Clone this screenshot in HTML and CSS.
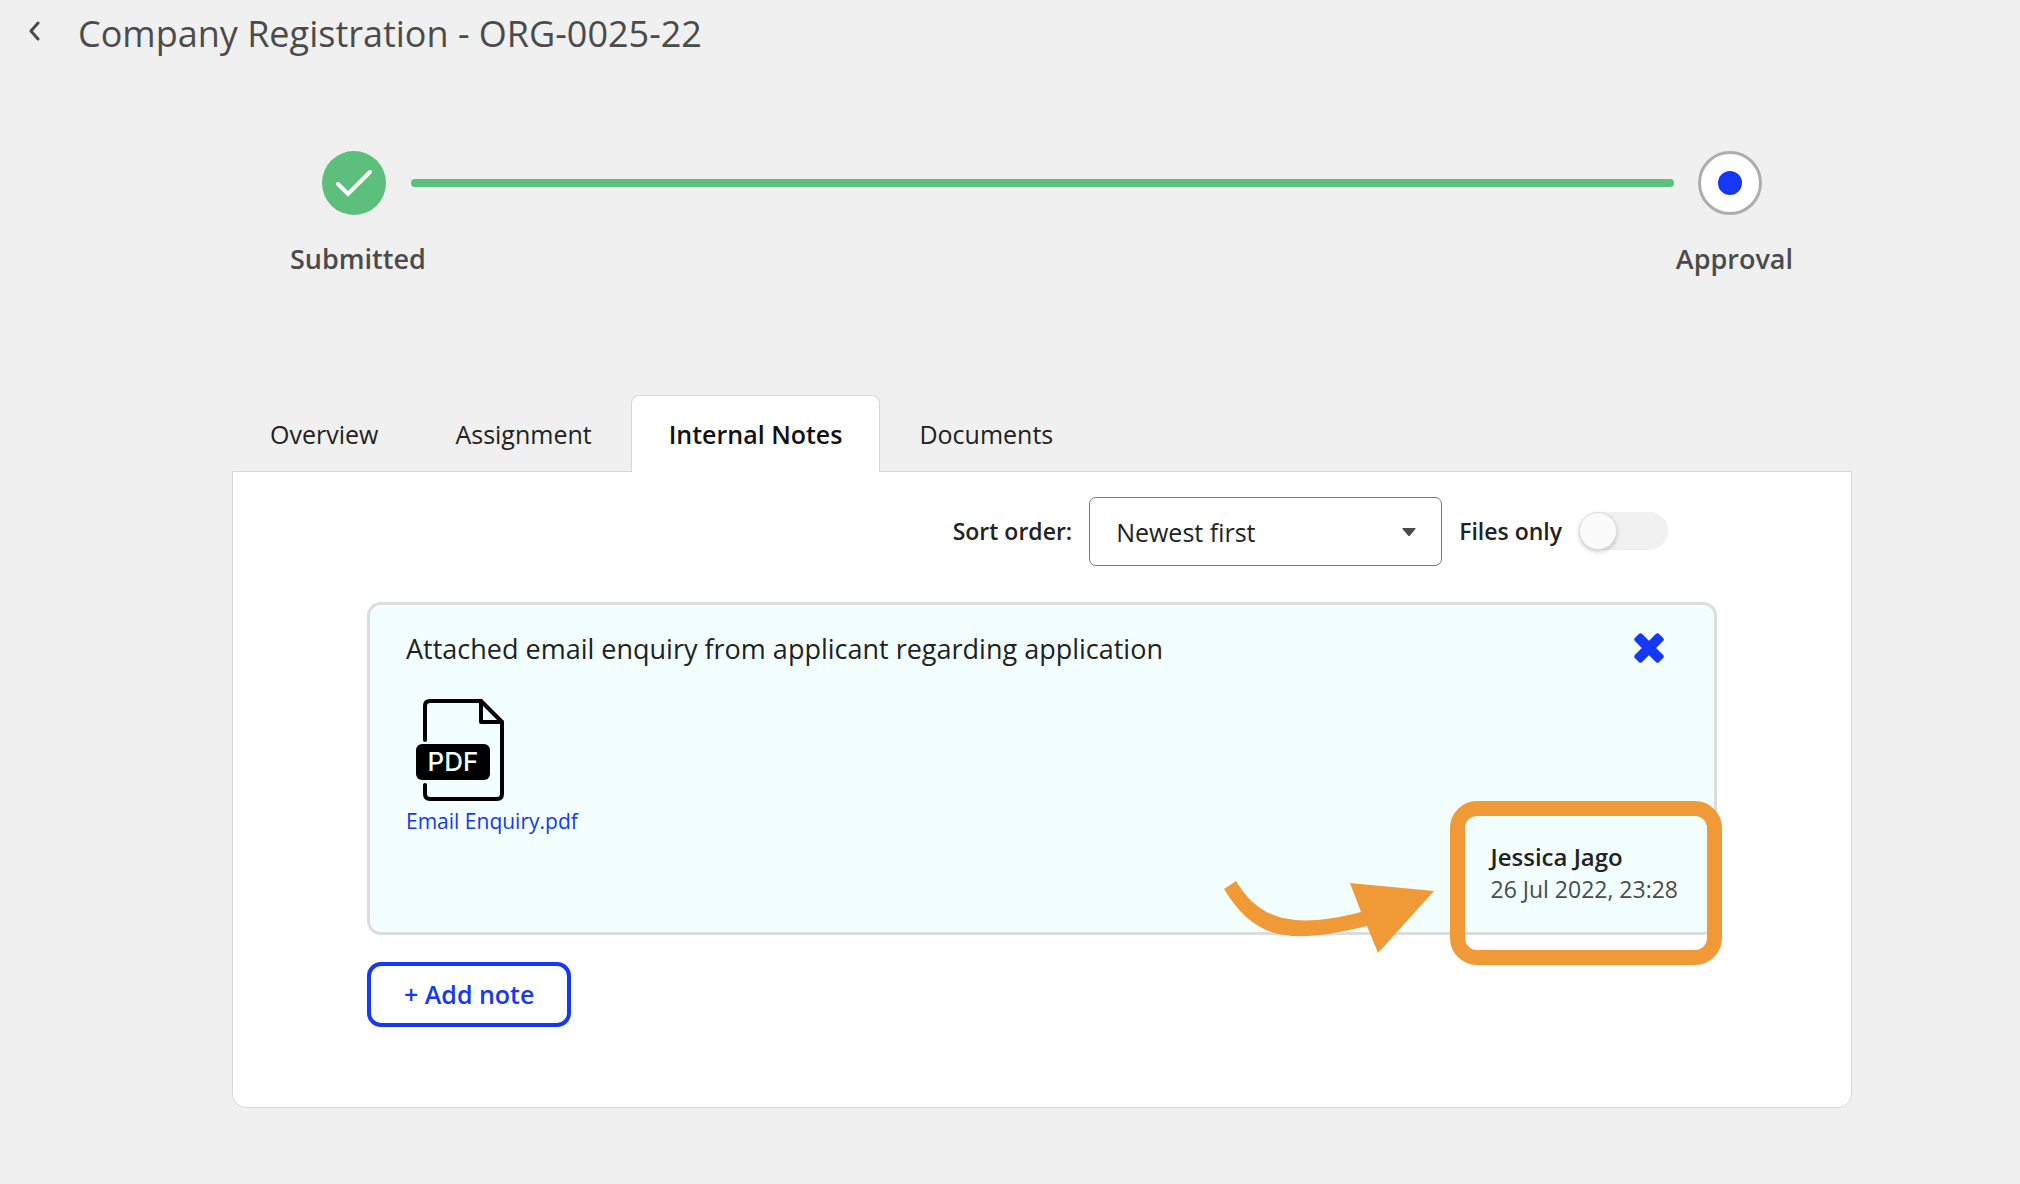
FILE: index.html
```html
<!DOCTYPE html>
<html lang="en">
<head>
<meta charset="utf-8">
<meta name="viewport" content="width=device-width, initial-scale=1">
<title>Company Registration - ORG-0025-22</title>
<link rel="stylesheet" href="styles.css">
</head>
<body>
<header class="page-header">
  <button class="back" type="button" aria-label="Back">
    <svg width="14" height="20" viewBox="0 0 14 20" aria-hidden="true"><path d="M10 2 3 10l7 8" fill="none" stroke="currentColor" stroke-width="3" stroke-linecap="round" stroke-linejoin="round"/></svg>
  </button>
  <h1 class="page-title">Company Registration - ORG-0025-22</h1>
</header>

<main>
  <ol class="stepper">
    <li class="step">
      <span class="step-mark step-mark-done">
        <svg width="40" height="30" viewBox="0 0 40 30" aria-hidden="true"><path d="M4 16 14 26 36 4" fill="none" stroke="currentColor" stroke-width="4" stroke-linecap="round"/></svg>
      </span>
      <span class="step-label">Submitted</span>
    </li>
    <li class="step-line" role="presentation"></li>
    <li class="step" aria-current="step">
      <span class="step-mark step-mark-current"><span class="step-dot"></span></span>
      <span class="step-label">Approval</span>
    </li>
  </ol>

  <div class="record">
    <div class="tabs" role="tablist">
      <button class="tab" type="button" role="tab">Overview</button>
      <button class="tab" type="button" role="tab">Assignment</button>
      <button class="tab tab-active" type="button" role="tab" aria-selected="true">Internal Notes</button>
      <button class="tab" type="button" role="tab">Documents</button>
    </div>

    <section class="panel" role="tabpanel">
      <div class="toolbar">
        <label class="toolbar-label" for="sort">Sort order:</label>
        <div class="select-wrap">
          <select class="select" id="sort">
            <option>Newest first</option>
            <option>Oldest first</option>
          </select>
          <svg class="select-arrow" width="14" height="8" viewBox="0 0 14 8" aria-hidden="true"><path d="M1 0h12q1 0 .5 1L8 7.500q-1 1-2 0L.5 1Q0 0 1 0z" fill="currentColor"/></svg>
        </div>
        <label class="toolbar-label" for="files-only">Files only</label>
        <input class="switch" id="files-only" type="checkbox" role="switch">
      </div>

      <article class="note">
        <div class="note-head">
          <p class="note-text">Attached email enquiry from applicant regarding application</p>
          <button class="note-remove" type="button" aria-label="Delete note">
            <svg width="30" height="30" viewBox="0 0 30 30" aria-hidden="true"><g fill="currentColor"><rect x="-2" y="10" width="34" height="10" rx="2" transform="rotate(45 15 15)"/><rect x="-2" y="10" width="34" height="10" rx="2" transform="rotate(-45 15 15)"/></g></svg>
          </button>
        </div>
        <a class="attachment" href="#email-enquiry">
          <svg class="attachment-icon" width="88" height="102" viewBox="0 0 88 102" aria-hidden="true">
            <g fill="none" stroke="#000" stroke-width="4" stroke-linecap="round" stroke-linejoin="round">
              <path d="M9 41V7q0-5 5-5h51l21 21v72q0 5-5 5H14q-5 0-5-5V86"/>
              <path d="M65 2v21h21"/>
            </g>
            <rect y="45" width="74" height="36" rx="6"/>
            <text class="attachment-type" x="37" y="72" text-anchor="middle">PDF</text>
          </svg>
          <span>Email Enquiry.pdf</span>
        </a>
        <footer class="note-meta">
          <strong class="note-author">Jessica Jago</strong>
          <time class="note-date" datetime="2022-07-26T23:28">26 Jul 2022, 23:28</time>
          <span class="callout-box"></span>
          <svg class="callout-arrow" width="212" height="76" viewBox="1223 878 212 76" aria-hidden="true">
            <path d="M1224 889 1236 881C1259 919 1291 930 1361 912L1350 883 1434 891 1378 953 1367 926C1292 944 1256 942 1224 889z" fill="#f09937"/>
          </svg>
        </footer>
      </article>

      <button class="add-note" type="button">+ Add note</button>
    </section>
  </div>
</main>
</body>
</html>
```
FILE: styles.css
```css
*,
*::before {
  box-sizing: border-box;
}

body {
  margin: 0;
  background: #f0f0f0;
  color: #222;
  font-family: "Open Sans", "Noto Sans", sans-serif;
  font-size: 25px;
}

button,
select {
  font: inherit;
  color: inherit;
}

button {
  cursor: pointer;
}

.page-header {
  display: flex;
  align-items: flex-start;
  gap: 36px;
  padding: 10px 28px 0;
  color: #4b4b4b;
}

.back {
  display: flex;
  margin: 11px 0 0;
  padding: 0;
  border: 0;
  background: none;
}

.page-title {
  margin: 0;
  font-size: 36px;
  font-weight: 400;
  line-height: 48px;
}

.stepper {
  display: flex;
  align-items: flex-start;
  margin: 93px 227px 0 290px;
  padding: 0;
  list-style: none;
}

.step {
  display: flex;
  flex-direction: column;
  align-items: center;
  gap: 26px;
}

.step-mark {
  display: flex;
  align-items: center;
  justify-content: center;
  width: 64px;
  height: 64px;
  margin-right: 8px;
  border-radius: 50%;
}

.step-mark-done {
  background: #5dbf7c;
  color: #fff;
}

.step-mark-current {
  border: 3px solid #adadad;
  background: #fff;
}

.step-dot {
  width: 24px;
  height: 24px;
  border-radius: 50%;
  background: #1638f5;
}

.step-label {
  color: #4b4b4b;
  font-size: 27px;
  font-weight: 600;
  line-height: 36px;
}

.step-line {
  flex: 1;
  height: 8px;
  margin: 28px 2px 0 -15px;
  border-radius: 4px;
  background: #5dbf7c;
}

.record {
  margin: 118px 168px 76px 232px;
}

.tabs {
  display: flex;
  gap: 1px;
}

.tab {
  height: 77px;
  padding: 0 37px;
  border: 1px solid transparent;
  border-bottom: 0;
  background: none;
}

.tab-active {
  position: relative;
  border-color: #d6d6d6;
  border-radius: 8px 8px 0 0;
  background: #fff;
  color: #111;
  font-weight: 600;
}

.panel {
  margin-top: -1px;
  padding: 25px 134px 80px;
  border: 1px solid #d6d6d6;
  border-radius: 0 0 14px 14px;
  background: #fff;
}

.toolbar {
  display: flex;
  align-items: center;
  justify-content: flex-end;
  gap: 17px;
  padding-right: 49px;
}

.toolbar-label {
  padding-bottom: 2px;
  font-size: 23px;
  font-weight: 600;
}

.select-wrap {
  display: grid;
  align-items: center;
  width: 353px;
}

.select {
  grid-area: 1 / 1;
  width: 100%;
  height: 69px;
  padding: 0 26px;
  border: 1px solid #777;
  border-radius: 7px;
  background: #fff;
  appearance: none;
}

.select-arrow {
  grid-area: 1 / 1;
  justify-self: end;
  margin-right: 26px;
  color: #4b4b4b;
  pointer-events: none;
}

.switch {
  display: flex;
  width: 89px;
  height: 38px;
  margin: 0 0 2px;
  border-radius: 19px;
  background: #f1f1f1;
  appearance: none;
}

.switch::before {
  width: 38px;
  border: 1px solid #ddd;
  border-radius: 50%;
  background: #fbfbfb;
  box-shadow: 0 2px 4px rgba(0, 0, 0, 0.2);
  content: "";
}

.switch:checked {
  justify-content: flex-end;
}

.note {
  display: flex;
  flex-direction: column;
  align-items: flex-start;
  margin-top: 36px;
  padding: 26px 36px 27px;
  border: 3px solid #dcdcdc;
  border-radius: 14px;
  background: #f3ffff;
}

.note-head {
  display: flex;
  align-self: stretch;
  justify-content: space-between;
}

.note-text {
  margin: 0;
  font-size: 27px;
  line-height: 36px;
}

.note-remove {
  display: flex;
  margin: 2px 14px 0 0;
  padding: 0;
  border: 0;
  background: none;
  color: #1638f5;
}

.attachment {
  display: flex;
  flex-direction: column;
  gap: 5px;
  margin-top: 32px;
  color: #1638f5;
  font-size: 21px;
  line-height: 30px;
  text-decoration: none;
}

.attachment-icon {
  margin-left: 10px;
}

.attachment-type {
  fill: #f3ffff;
  font-family: Inter, sans-serif;
  font-size: 26px;
  font-weight: 500;
}

.note-meta {
  position: relative;
  display: flex;
  flex-direction: column;
  align-self: flex-end;
  margin-top: 5px;
  line-height: 32px;
}

.note-author {
  font-size: 24px;
  font-weight: 600;
}

.note-date {
  color: #4b4b4b;
  font-size: 23px;
}

.callout-box {
  position: absolute;
  inset: -40px -44px -60px -40px;
  border: 15px solid #f09937;
  border-radius: 27px;
}

.callout-arrow {
  position: absolute;
  top: 37px;
  right: 243px;
}

.add-note {
  display: block;
  height: 65px;
  margin-top: 27px;
  padding: 0 33px 2px;
  border: 4px solid #1638f5;
  border-radius: 14px;
  background: #fff;
  color: #1638f5;
  font-weight: 600;
}
```
